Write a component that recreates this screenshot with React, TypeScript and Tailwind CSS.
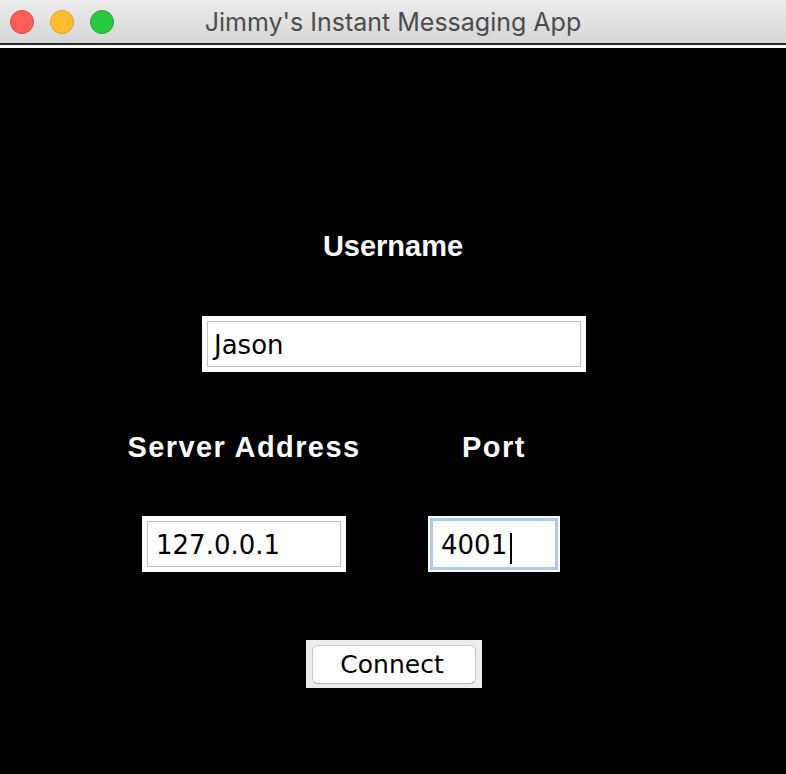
import React from "react";

export default function App() {
  const titleFont = { fontFamily: "Inter, 'Liberation Sans', sans-serif" } as React.CSSProperties;
  const uiFont = { fontFamily: "'DejaVu Sans', 'Liberation Sans', sans-serif" } as React.CSSProperties;
  const labelFont = { fontFamily: "'Liberation Sans', Arial, sans-serif" } as React.CSSProperties;
  return (
    <div className="w-[786px] h-[774px] flex flex-col bg-black overflow-hidden" style={uiFont}>
      {/* Title bar */}
      <div className="relative h-[43px] flex items-center justify-center bg-gradient-to-b from-[#ececec] to-[#d6d6d6]">
        <div className="absolute left-[10px] top-[10px] flex gap-[16px]">
          <div className="w-[24px] h-[24px] rounded-full bg-[#fd5f57] border border-[#e2463f]" />
          <div className="w-[24px] h-[24px] rounded-full bg-[#febc2e] border border-[#e0a023]" />
          <div className="w-[24px] h-[24px] rounded-full bg-[#29c940] border border-[#1ea832]" />
        </div>
        <span className="text-[25px] leading-none text-[#4c4c4c] mt-[1px]" style={titleFont}>
          Jimmy's Instant Messaging App
        </span>
      </div>
      <div className="h-[2px] bg-[#2a2a2a]" />
      <div className="h-[3px] bg-white" />

      {/* Content */}
      <div className="flex-1 bg-black flex flex-col">
        <div className="mt-[185px] h-[26px] leading-[26px] text-center text-white font-bold text-[29px]" style={labelFont}>
          Username
        </div>

        <div className="mt-[57px] flex justify-center pl-[2px]">
          <div className="w-[384px] h-[56px] bg-white p-[5px]">
            <div className="h-full border border-[#c3c3c3] flex items-center pl-[6px] pt-[2px] text-[26px] text-black">Jason</div>
          </div>
        </div>

        <div className="mt-[62px] flex pl-[114px]">
          <div className="w-[260px] h-[26px] leading-[26px] text-center text-white font-bold text-[29px] tracking-[1.4px]" style={labelFont}>
            Server Address
          </div>
          <div className="w-[240px] h-[26px] leading-[26px] text-center text-white font-bold text-[29px] tracking-[1.5px]" style={labelFont}>
            Port
          </div>
        </div>

        <div className="mt-[56px] flex pl-[114px]">
          <div className="w-[260px] flex justify-center">
            <div className="w-[204px] h-[56px] bg-white p-[5px]">
              <div className="h-full border border-[#c3c3c3] flex items-center pl-[8px] pt-[2px] text-[26px] text-black">127.0.0.1</div>
            </div>
          </div>
          <div className="w-[240px] flex justify-center">
            <div className="w-[132px] h-[56px] bg-white p-[2px]">
              <div className="h-full border-[3px] border-[#a7c9f2] flex items-center pl-[8px] pt-[2px] text-[26px] text-black">
                <span>4001</span>
                <span className="ml-[3px] w-[2px] h-[31px] bg-black mt-[6px]" />
              </div>
            </div>
          </div>
        </div>

        <div className="mt-[68px] flex justify-center pl-[2px]">
          <div className="w-[176px] h-[48px] bg-[#ececec] pl-[6px] pr-[6px] pt-[5px] pb-[4px]">
            <div className="h-full rounded-[6px] bg-white border border-[#c9c9c9] border-b-[#b0b0b0] flex items-center justify-center text-[25px] text-black pr-[4px] pt-[1px]">
              Connect
            </div>
          </div>
        </div>
      </div>
    </div>
  );
}
